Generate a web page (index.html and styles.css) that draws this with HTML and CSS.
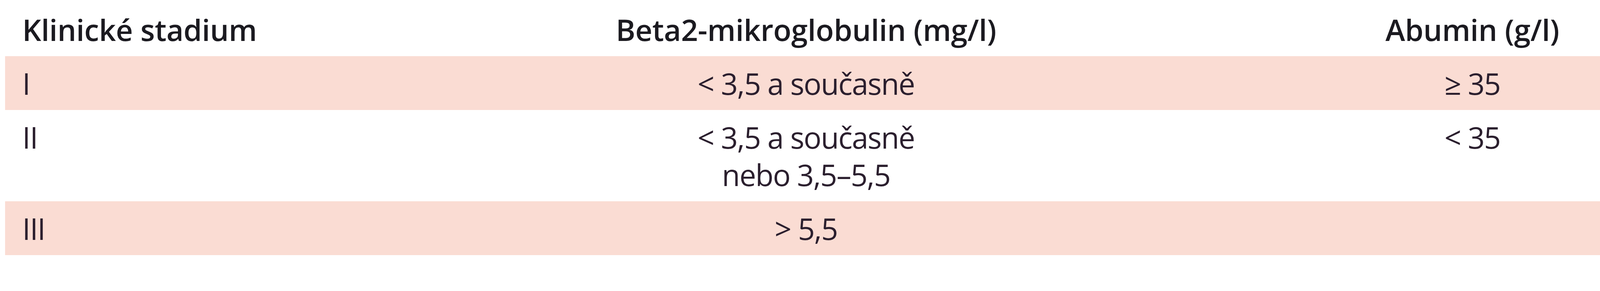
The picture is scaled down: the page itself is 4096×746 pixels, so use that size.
FILE: index.html
```html
<!DOCTYPE html>
<html lang="cs">
<head>
<meta charset="utf-8">
<title>Klinické stadium</title>
<link rel="stylesheet" href="styles.css">
</head>
<body>
<table class="staging">
  <colgroup>
    <col class="c-stage">
    <col class="c-beta">
    <col class="c-alb">
  </colgroup>
  <thead>
    <tr>
      <th class="stage">Klinické stadium</th>
      <th class="mid">Beta2-mikroglobulin (mg/l)</th>
      <th class="mid">Abumin (g/l)</th>
    </tr>
  </thead>
  <tbody>
    <tr class="shade">
      <td class="stage">I</td>
      <td class="mid">&lt; 3,5 a současně</td>
      <td class="mid">≥ 35</td>
    </tr>
    <tr>
      <td class="stage">II</td>
      <td class="mid">&lt; 3,5 a současně<br>nebo 3,5–5,5</td>
      <td class="mid">&lt; 35</td>
    </tr>
    <tr class="shade">
      <td class="stage">III</td>
      <td class="mid">&gt; 5,5</td>
      <td class="mid"></td>
    </tr>
  </tbody>
</table>
</body>
</html>
```

FILE: styles.css
```css
html, body {
  margin: 0;
  padding: 0;
  background: #ffffff;
}

.staging {
  margin-left: 12.5px;
  width: calc(100% - 12.5px);
  border-collapse: collapse;
  table-layout: fixed;
  font-family: "Open Sans", "Noto Sans", sans-serif;
  font-size: 76px;
  line-height: 96px;
  color: #2b1f2e;
}

.c-stage { width: 672px; }
.c-beta { width: 2758px; }
.c-alb { width: auto; }

.staging th {
  font-weight: 600;
  color: #1b1a20;
  padding: 28px 0 20.4px;
  vertical-align: top;
  letter-spacing: -0.3px;
}

.staging td {
  font-weight: 400;
  padding: 21.5px 0 20.4px;
  vertical-align: top;
  letter-spacing: -1.8px;
}

.staging .stage {
  text-align: left;
  padding-left: 44.5px;
}

.staging .mid {
  text-align: center;
}

.shade {
  background: #fadcd3;
}
```
